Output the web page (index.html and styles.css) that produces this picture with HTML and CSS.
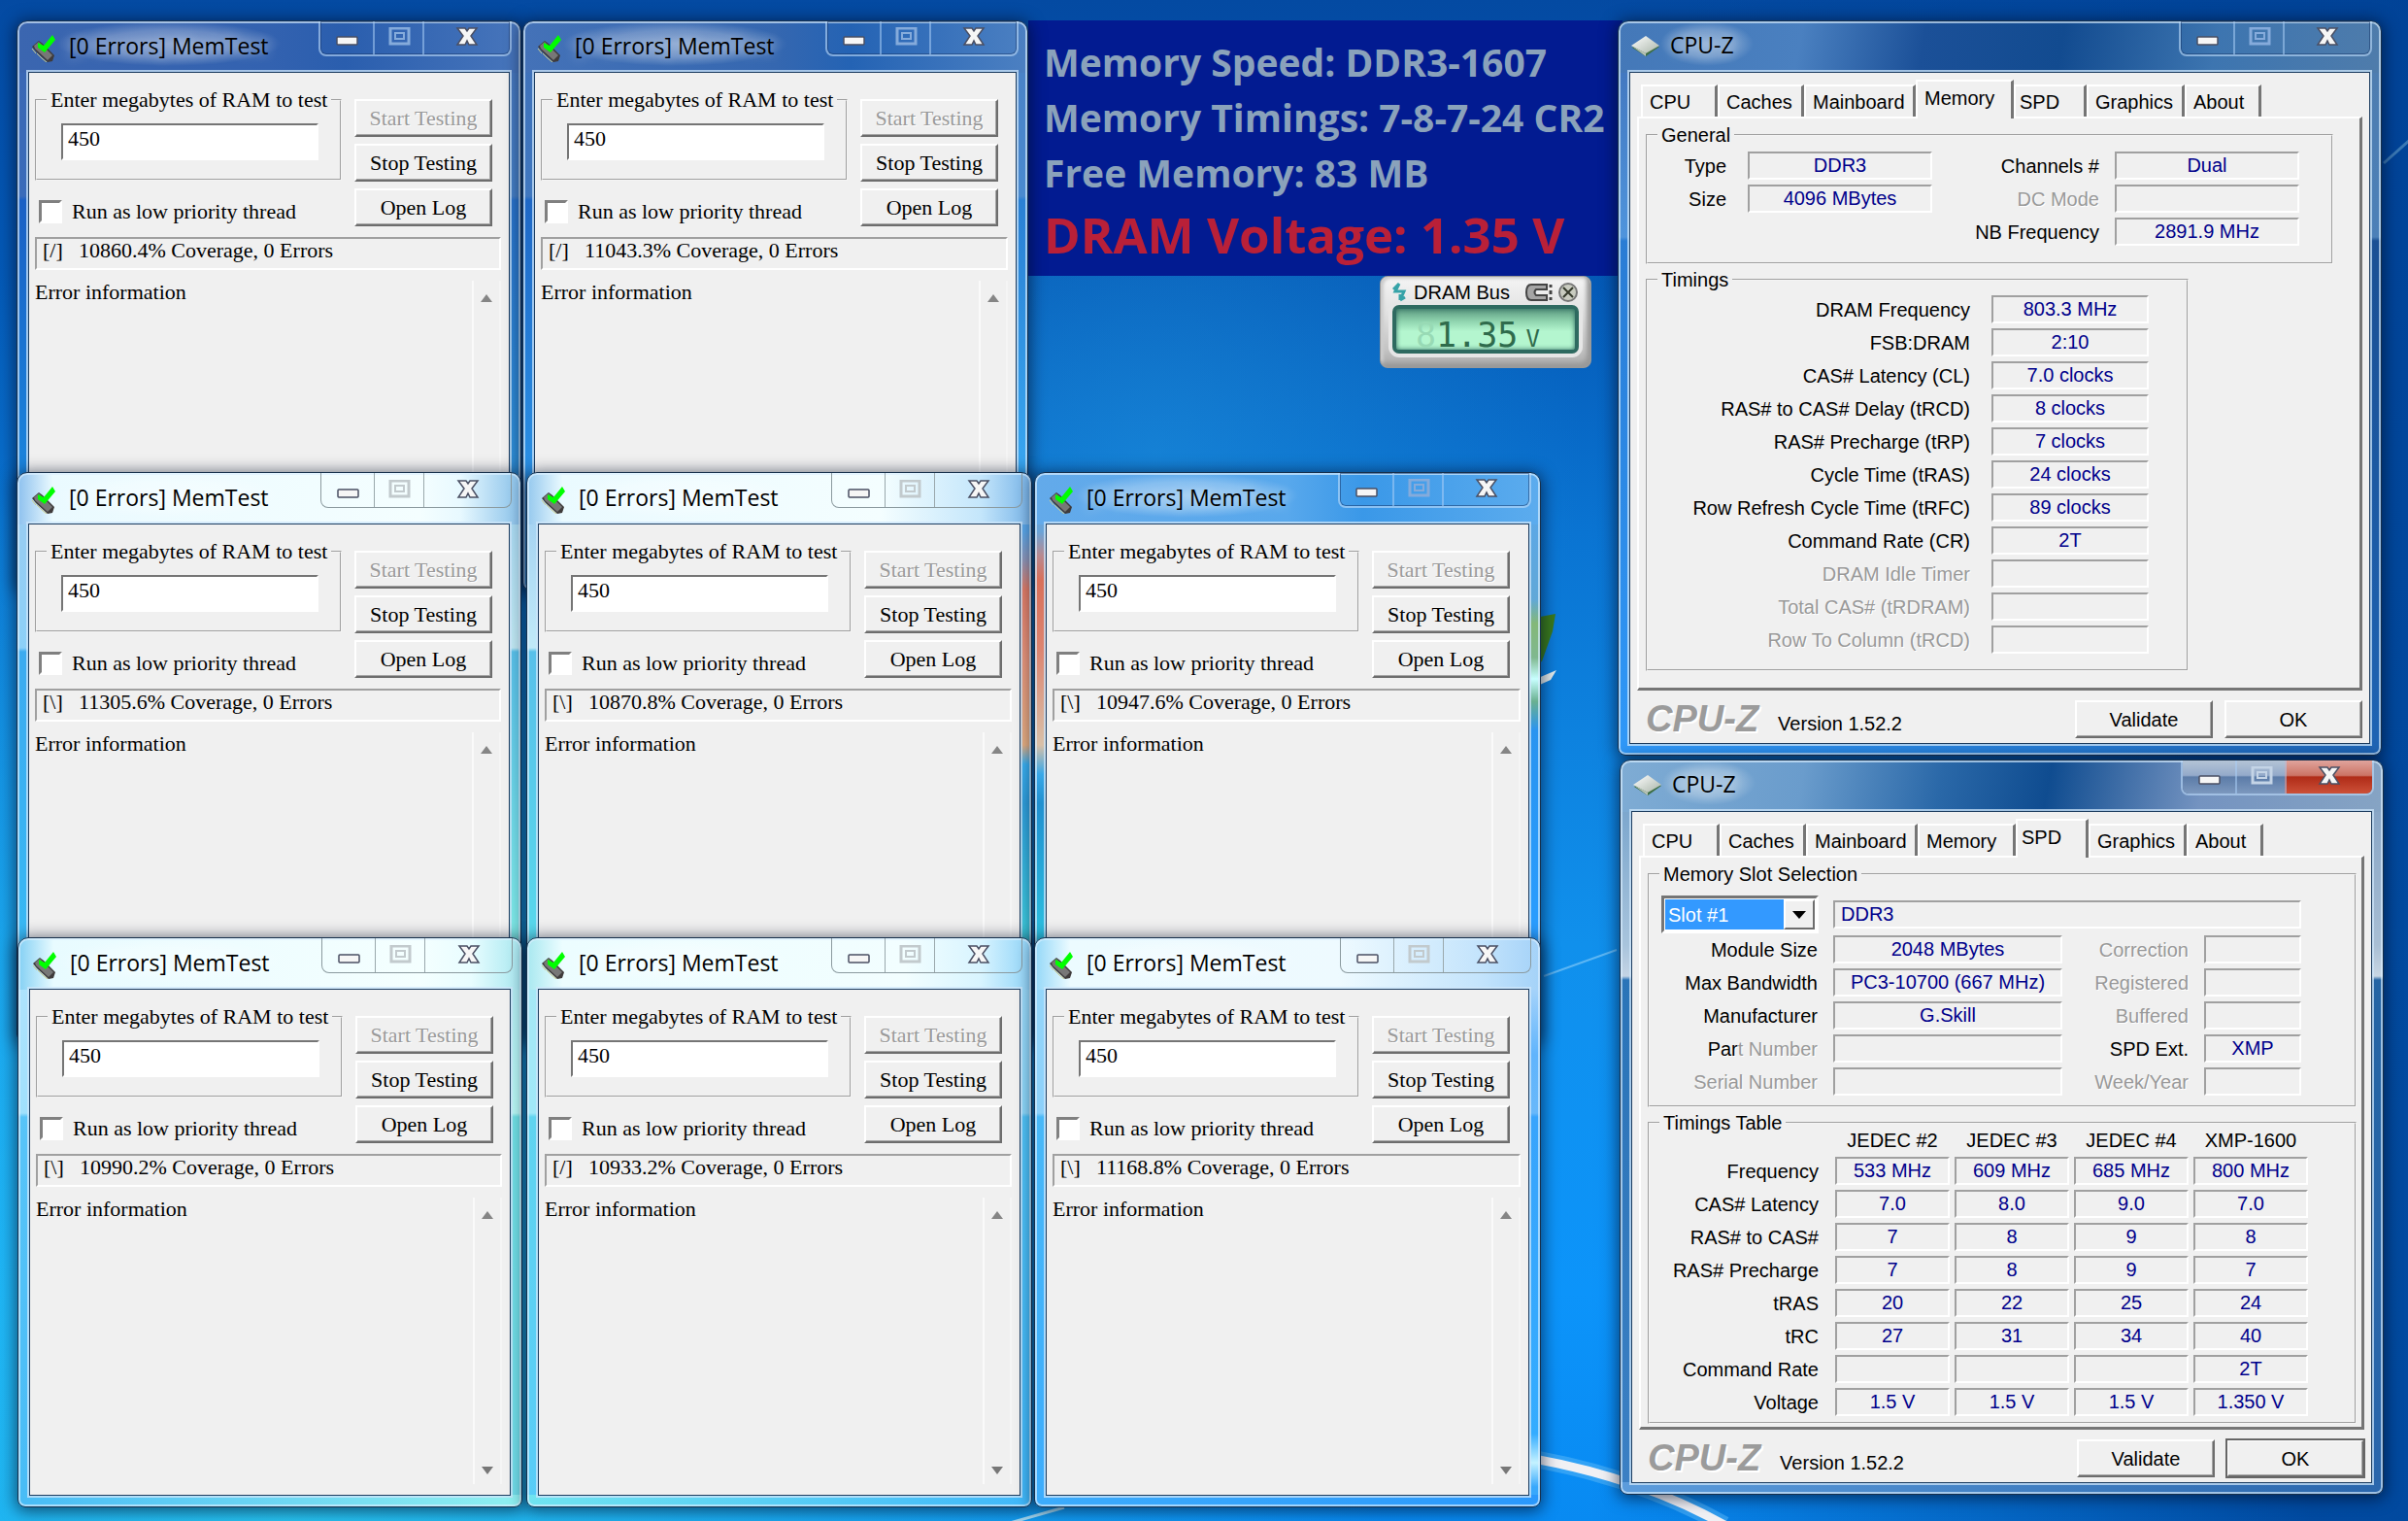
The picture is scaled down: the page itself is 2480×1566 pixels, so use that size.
FILE: index.html
```html
<!DOCTYPE html>
<html lang="en">
<head>
<meta charset="utf-8">
<title>Desktop - MemTest and CPU-Z</title>
<link rel="stylesheet" href="styles.css">
</head>
<body>
<svg class="defs" aria-hidden="true">
  <defs>
    <linearGradient id="stone" x1="0" y1="0" x2="1" y2="1"><stop offset="0" stop-color="#fff"/><stop offset="1" stop-color="#a9b5a9"/></linearGradient>
  </defs>
  <symbol id="i-chip" viewBox="0 0 26 28">
    <path d="M1 12 8 6 12 9 24 21 22 27 17 28 5 17Z" fill="#3f3b3b"/>
    <path d="M3 11 8 7 22 21 17 26 4 14Z" fill="#777"/>
    <path d="M1 14 5 19M6 19 11 24M11 24 16 28" stroke="#c9cc8e" stroke-width="1"/>
    <path d="M7 8 13 11 22 0 25 5 14 18 7 13Z" fill="#0f0"/>
  </symbol>
  <symbol id="i-gem" viewBox="0 0 30 22">
    <path d="M15 2 29 11 15 21 1 12Z" fill="#3c6e44"/>
    <path d="M15 0 29 10 15 18 0 10Z" fill="url(#stone)"/>
    <path d="M0 10 15 18V21Z" fill="#b9c4b9"/>
  </symbol>
  <symbol id="i-min" viewBox="0 0 24 20"><rect x="2" y="10" width="21" height="8" rx="1" fill="#f6f6f6" stroke="#4a4f63" stroke-width="1.5"/></symbol>
  <symbol id="i-max" viewBox="0 0 24 20"><rect x="3" y="1" width="19" height="16" fill="none" stroke="currentColor" stroke-width="3"/><rect x="8" y="6" width="9" height="6" fill="none" stroke="currentColor" stroke-width="2"/></symbol>
  <symbol id="i-close" viewBox="0 0 24 20">
    <path d="M2 1h8l2 3 2-3h8l-6 8 6 9h-8l-2-4-2 4H2l6-9Z" fill="#f6f6f6" stroke="#4a4f63" stroke-width="1.5"/>
  </symbol>
</svg>

<main class="desktop">
  <svg class="wallpaper" viewBox="0 0 2480 1566" preserveAspectRatio="none" aria-hidden="true">
    <path d="M1560 640 1602 632 1599 650 1588 681 1560 690Z" fill="#3a7a1c"/>
    <path d="M1570 704 1603 690 1597 700 1570 712Z" fill="#e4ecec"/>
    <path d="M1590 1005 1665 978" stroke="#5cb6f4" stroke-width="2"/>
    <path d="M1040 1568 1096 1552" stroke="#a5dcf5" stroke-width="3"/>
    <path d="M2455 168 2482 144" stroke="#3a78b4" stroke-width="3"/>
    <path d="M1580 1502 Q1690 1522 1776 1570" stroke="#5ab8f8" stroke-width="18" fill="none" opacity=".5"/>
    <path d="M1580 1502 Q1690 1522 1776 1570" stroke="#f0f0f4" stroke-width="9" fill="none"/>
  </svg>

  <section class="note">
    <p>Memory Speed: DDR3-1607</p>
    <p>Memory Timings: 7-8-7-24 CR2</p>
    <p>Free Memory: 83 MB</p>
    <p class="volt">DRAM Voltage: 1.35 V</p>
  </section>

  <section class="meter">
    <header>
      <svg width="16" height="20" viewBox="0 0 16 20"><path d="M7 1 3 9H12L8 18M8 18V12M8 18 13 15M7 1 1 7" fill="none" stroke="#36a3a8" stroke-width="3"/></svg>
      <h2>DRAM Bus</h2>
      <svg class="end" width="30" height="20" viewBox="0 0 30 20"><path d="M23 2H7Q2 2 2 10T7 18H23V13H12Q9 10 12 7H23Z" fill="#a5a5a5" stroke="#444" stroke-width="2"/><path d="M27 2V5M27 8V12M27 15V18" stroke="#444" stroke-width="3"/></svg>
      <svg width="22" height="22" viewBox="0 0 22 22"><circle cx="11" cy="11" r="9" fill="#c9ccc0" stroke="#777" stroke-width="2"/><path d="M6 6 16 16M16 6 6 16" stroke="#353a2c" stroke-width="2"/></svg>
    </header>
    <div class="lcd"><span class="ghost">8</span><span class="digits">1.35</span><span class="unit">V</span></div>
  </section>

  <div id="memtests"></div>

  <section class="window cpuz cpuz-memory">
    <header class="titlebar"><svg width="30" height="22"><use href="#i-gem"/></svg><h1>CPU-Z</h1>
      <div class="caption"><button aria-label="Minimize"><svg><use href="#i-min"/></svg></button><button aria-label="Maximize" class="max"><svg><use href="#i-max"/></svg></button><button aria-label="Close" class="close"><svg><use href="#i-close"/></svg></button></div>
    </header>
    <div class="client">
      <nav class="tabs"><button>CPU</button><button>Caches</button><button>Mainboard</button><button class="active">Memory</button><button>SPD</button><button>Graphics</button><button>About</button></nav>
      <div class="page">
        <fieldset class="general"><legend>General</legend>
          <div class="fields">
            <label><span>Type</span><output>DDR3</output></label>
            <label><span>Size</span><output>4096 MBytes</output></label>
          </div>
          <div class="fields">
            <label><span>Channels #</span><output>Dual</output></label>
            <label class="off"><span>DC Mode</span><output></output></label>
            <label><span>NB Frequency</span><output>2891.9 MHz</output></label>
          </div>
        </fieldset>
        <fieldset class="timings"><legend>Timings</legend>
          <div class="fields">
            <label><span>DRAM Frequency</span><output>803.3 MHz</output></label>
            <label><span>FSB:DRAM</span><output>2:10</output></label>
            <label><span>CAS# Latency (CL)</span><output>7.0 clocks</output></label>
            <label><span>RAS# to CAS# Delay (tRCD)</span><output>8 clocks</output></label>
            <label><span>RAS# Precharge (tRP)</span><output>7 clocks</output></label>
            <label><span>Cycle Time (tRAS)</span><output>24 clocks</output></label>
            <label><span>Row Refresh Cycle Time (tRFC)</span><output>89 clocks</output></label>
            <label><span>Command Rate (CR)</span><output>2T</output></label>
            <label class="off"><span>DRAM Idle Timer</span><output></output></label>
            <label class="off"><span>Total CAS# (tRDRAM)</span><output></output></label>
            <label class="off"><span>Row To Column (tRCD)</span><output></output></label>
          </div>
        </fieldset>
      </div>
      <footer><strong>CPU-Z</strong><span>Version 1.52.2</span><button class="btn">Validate</button><button class="btn">OK</button></footer>
    </div>
  </section>

  <section class="window cpuz cpuz-spd">
    <header class="titlebar"><svg width="30" height="22"><use href="#i-gem"/></svg><h1>CPU-Z</h1>
      <div class="caption"><button aria-label="Minimize"><svg><use href="#i-min"/></svg></button><button aria-label="Maximize" class="max"><svg><use href="#i-max"/></svg></button><button aria-label="Close" class="close"><svg><use href="#i-close"/></svg></button></div>
    </header>
    <div class="client">
      <nav class="tabs"><button>CPU</button><button>Caches</button><button>Mainboard</button><button>Memory</button><button class="active">SPD</button><button>Graphics</button><button>About</button></nav>
      <div class="page">
        <fieldset class="slots"><legend>Memory Slot Selection</legend>
          <div class="slot-row">
            <div class="combo"><select aria-label="Memory slot"><option>Slot #1</option></select><span class="drop"></span></div>
            <output class="wide">DDR3</output>
          </div>
          <div class="slot-cols">
            <div class="fields">
              <label><span>Module Size</span><output>2048 MBytes</output></label>
              <label><span>Max Bandwidth</span><output>PC3-10700 (667 MHz)</output></label>
              <label><span>Manufacturer</span><output>G.Skill</output></label>
              <label class="off"><span><b>Par</b>t Number</span><output></output></label>
              <label class="off"><span>Serial Number</span><output></output></label>
            </div>
            <div class="fields flags">
              <label class="off"><span>Correction</span><output></output></label>
              <label class="off"><span>Registered</span><output></output></label>
              <label class="off"><span>Buffered</span><output></output></label>
              <label><span>SPD Ext.</span><output>XMP</output></label>
              <label class="off"><span>Week/Year</span><output></output></label>
            </div>
          </div>
        </fieldset>
        <fieldset class="table-box"><legend>Timings Table</legend>
          <table>
            <thead><tr><td></td><th>JEDEC #2</th><th>JEDEC #3</th><th>JEDEC #4</th><th>XMP-1600</th></tr></thead>
            <tbody>
              <tr><th>Frequency</th><td>533 MHz</td><td>609 MHz</td><td>685 MHz</td><td>800 MHz</td></tr>
              <tr><th>CAS# Latency</th><td>7.0</td><td>8.0</td><td>9.0</td><td>7.0</td></tr>
              <tr><th>RAS# to CAS#</th><td>7</td><td>8</td><td>9</td><td>8</td></tr>
              <tr><th>RAS# Precharge</th><td>7</td><td>8</td><td>9</td><td>7</td></tr>
              <tr><th>tRAS</th><td>20</td><td>22</td><td>25</td><td>24</td></tr>
              <tr><th>tRC</th><td>27</td><td>31</td><td>34</td><td>40</td></tr>
              <tr><th>Command Rate</th><td></td><td></td><td></td><td>2T</td></tr>
              <tr><th>Voltage</th><td>1.5 V</td><td>1.5 V</td><td>1.5 V</td><td>1.350 V</td></tr>
            </tbody>
          </table>
        </fieldset>
      </div>
      <footer><strong>CPU-Z</strong><span>Version 1.52.2</span><button class="btn">Validate</button><button class="btn default">OK</button></footer>
    </div>
  </section>
</main>

<template id="memtest">
  <section class="window memtest">
    <header class="titlebar"><svg width="26" height="28"><use href="#i-chip"/></svg><h1>[0 Errors] MemTest</h1>
      <div class="caption"><button aria-label="Minimize"><svg><use href="#i-min"/></svg></button><button aria-label="Maximize" class="max"><svg><use href="#i-max"/></svg></button><button aria-label="Close" class="close"><svg><use href="#i-close"/></svg></button></div>
    </header>
    <div class="client">
      <div class="setup">
        <div class="options">
          <fieldset><legend>Enter megabytes of RAM to test</legend><input type="text" value="450" aria-label="Enter megabytes of RAM to test"></fieldset>
          <label class="check"><input type="checkbox">Run as low priority thread</label>
        </div>
        <div class="actions"><button class="btn" disabled>Start Testing</button><button class="btn">Stop Testing</button><button class="btn">Open Log</button></div>
      </div>
      <p class="status"><span class="spin"></span><span class="coverage"></span></p>
      <div class="log"><p>Error information</p><div class="scroll"><i class="up"></i><i class="down"></i></div></div>
    </div>
  </section>
</template>
<script src="app.js"></script>
</body>
</html>
```
FILE: app.js
```js
// One entry per running MemTest instance, back to front.
const instances = [
  { slot: 'm1', spin: '[/]', coverage: '10860.4%' },
  { slot: 'm2', spin: '[/]', coverage: '11043.3%' },
  { slot: 'm3', spin: '[\\]', coverage: '11305.6%', light: true },
  { slot: 'm4', spin: '[\\]', coverage: '10870.8%', light: true },
  { slot: 'm5', spin: '[\\]', coverage: '10947.6%' },
  { slot: 'm6', spin: '[\\]', coverage: '10990.2%', light: true },
  { slot: 'm7', spin: '[/]', coverage: '10933.2%', light: true },
  { slot: 'm8', spin: '[\\]', coverage: '11168.8%', light: true },
];
const template = document.getElementById('memtest');
const layer = document.getElementById('memtests');
for (const item of instances) {
  const node = template.content.cloneNode(true);
  const win = node.querySelector('.window');
  win.classList.add(item.slot);
  if (item.light) win.classList.add('light');
  node.querySelector('.spin').textContent = item.spin;
  node.querySelector('.coverage').textContent = item.coverage + ' Coverage, 0 Errors';
  layer.append(node);
}
```
FILE: styles.css
```css
* { box-sizing: border-box; }
body { margin: 0; background: #0a70cf; }
h1, h2, p { margin: 0; }
h1, h2 { font-weight: normal; }
button, input, select { font: inherit; color: inherit; margin: 0; }
fieldset { min-width: 0; margin: 0; }
.defs { position: absolute; width: 0; height: 0; }

.desktop {
  position: relative;
  min-height: 100vh;
  overflow: hidden;
  font: 20px/24px "Liberation Sans", Arial, sans-serif;
  color: #000;
  background:
    linear-gradient(90deg, rgba(0,70,160,0) 66%, rgba(0,66,150,.9) 96%),
    radial-gradient(circle at 12% 100%, rgba(50,215,240,.75) 0, rgba(30,180,240,0) 42%),
    radial-gradient(circle at 48% 30%, rgba(40,160,230,.4) 0, rgba(30,150,230,0) 26%),
    linear-gradient(180deg, #044aa2 0, #0459b6 18%, #0a74d2 35%, #1090ec 62%, #0c94fa 85%, #088af2 100%);
}
.wallpaper { position: absolute; inset: 0; width: 100%; height: 100%; }

/* overlay note */
.note {
  position: absolute; left: 1059px; top: 21px; width: 612px; height: 263px;
  padding: 14px 16px;
  background: #021b91;
  color: #8aa2bb;
  font: bold 39px/57px "Open Sans", "Noto Sans", sans-serif;
  white-space: nowrap;
}
.note .volt { font-size: 51px; line-height: 70px; color: #b92038; }

/* voltage meter */
.meter {
  position: absolute; left: 1421px; top: 284px; width: 218px; height: 95px;
  padding: 3px 12px 10px;
  border-radius: 8px;
  border: 1px solid #999;
  background: linear-gradient(180deg, #f4f4f4 0, #e2e2e2 40%, #c4c4c4 80%, #a8a8a8 100%);
  box-shadow: inset -4px -4px 4px #999, inset 3px 2px 3px #ccc;
}
.meter header { display: flex; align-items: center; gap: 4px; height: 26px; }
.meter h2 { font-size: 20px; margin-left: 2px; }
.meter .end { margin-left: auto; }
.lcd {
  display: flex; align-items: baseline;
  height: 50px; padding: 7px 0 0 20px;
  border: 4px solid #2e6a60; border-radius: 7px;
  background: linear-gradient(180deg, #5b9980 0, #8fd3ae 30%, #b4f6cf 55%, #b4f6cf 100%);
  box-shadow: 0 0 0 4px #e6e6e6, inset 0 0 5px #2e6a60;
  font: 35px/40px "DejaVu Sans Mono", monospace; color: #2f6b4c;
}
.ghost { color: #98dab5; }
.unit { font-size: 24px; margin-left: 8px; }

/* glass windows */
.window {
  position: absolute;
  display: flex; flex-direction: column;
  padding: 0 12px 12px;
  border: 1px solid #17304c;
  border-radius: 11px 11px 8px 8px;
  background:
    var(--title) top / 100% 53px no-repeat,
    linear-gradient(90deg, var(--bl), var(--br)) bottom / 100% 12px no-repeat,
    var(--left) left / 50% 100% no-repeat,
    var(--right) right / 50% 100% no-repeat;
  box-shadow: inset 0 0 0 2px rgba(220,240,255,.65), 0 2px 16px 2px rgba(0,12,35,.6);
}
.titlebar { display: flex; align-items: flex-start; height: 53px; flex: none; }
.titlebar > svg { margin: 14px 0 0 2px; flex: none; }
.titlebar h1 {
  font: 23px/28px "Open Sans", "Noto Sans", sans-serif;
  padding: 11px 13px 7px;
  background: radial-gradient(closest-side, rgba(255,255,255,.4), rgba(255,255,255,.25) 60%, rgba(255,255,255,0));
  text-shadow: 0 0 12px rgba(255,255,255,.6);
}
.caption {
  display: grid; grid-template-columns: 54px 51px 90px;
  margin: 0 -3px 0 auto;
  height: 36px;
  border: 2px solid rgba(190,220,250,.6); border-top: 0;
  border-radius: 0 0 8px 8px;
  box-shadow: inset 0 0 0 1px rgba(20,50,100,.5);
  color: #85abdb;
}
.caption button { display: grid; place-items: center; padding: 0; border: 0; background: none; }
.caption button + button { border-left: 2px solid rgba(170,205,245,.55); }
.caption svg { width: 24px; height: 20px; margin-bottom: 2px; }
.light .caption { color: #c2cacd; border-color: #8b9a9f; border-width: 0 1px 1px; box-shadow: none; }
.light .caption button + button { border-left: 1px solid #9aa8ac; }
.client {
  flex: 1; display: flex; flex-direction: column;
  background: #f0f0f0;
  outline: 1px solid #1d3d60;
  box-shadow: 0 0 0 3px rgba(205,230,250,.75);
}

.btn {
  width: 142px; height: 39px; padding: 0;
  background: #f0f0f0;
  border: 2px solid; border-color: #fff #6d6d6d #6d6d6d #fff;
  box-shadow: inset -1px -1px 0 #a5a5a5;
}
.btn:disabled { color: #9a9a9a; text-shadow: 1px 1px 0 #fff; }

/* MemTest */
.memtest { width: 520px; height: 587px; }
.memtest .client { padding: 16px 8px 11px 6px; font: 22px/24px "Liberation Serif", "Times New Roman", serif; }
.setup { display: flex; gap: 13px; }
.options { width: 316px; }
.options fieldset { height: 95px; padding: 12px 0 0 25px; border: 2px groove #f4f4f4; }
.options legend { margin-left: -15px; padding: 0 4px; }
.options input[type=text] {
  display: block; width: 265px; height: 38px; padding: 0 5px 6px;
  background: #fff; border: 2px solid; border-color: #757575 #fff #fff #757575;
}
.check { display: flex; align-items: center; gap: 10px; height: 28px; margin: 18px 0 0 4px; }
.check input {
  appearance: none; width: 24px; height: 24px;
  background: #fff; border: 3px solid; border-color: #808080 #fff #fff #808080;
}
.actions { display: flex; flex-direction: column; gap: 7px; padding-top: 11px; }
.status {
  display: flex; gap: 17px; height: 34px; margin-top: 11px; padding: 0 6px;
  border: 2px solid; border-color: #a0a0a0 #fff #fff #a0a0a0;
}
.spin { width: 20px; }
.log { flex: 1; display: flex; justify-content: space-between; margin-top: 11px; }
.scroll {
  display: flex; flex-direction: column; justify-content: space-between; align-items: center;
  width: 30px; padding: 14px 0 10px;
  border-left: 2px solid #fafafa; border-right: 2px solid #f5f5f5;
}
.scroll i { border: 6px solid transparent; }
.scroll .up { border-top: 0; border-bottom: 8px solid #858585; }
.scroll .down { border-bottom: 0; border-top: 8px solid #777; }

.m1 { left: 17px; top: 21px; --bl: #1a84dc; --br: #2f93dc;
  --title: linear-gradient(90deg, #3b66b0, #3362b0 50%, #2a5eae 65%, #4775bb);
  --left: linear-gradient(180deg, #3a66b2, #3a6cba 180px, #1a60c4 184px, #1a84dc 465px);
  --right: linear-gradient(180deg, #4775bb, #4580c6 180px, #2a74cc 184px, #2f93dc 465px); }
.m2 { left: 538px; top: 21px; width: 521px; --bl: #2a90e4; --br: #38a6f0;
  --title: linear-gradient(90deg, #4472b8, #3567b0 50%, #2463b4 65%, #4c80c2);
  --left: linear-gradient(180deg, #3f70b8, #4078c0 180px, #1f68c6 184px, #2a90e4 465px);
  --right: linear-gradient(180deg, #4a80c4, #4a8ad0 180px, #2a80d4 184px, #38a6f0 465px); }
.m3 { left: 17px; top: 486px; --bl: #38b8f4; --br: #80ece8;
  --title: linear-gradient(90deg, #8cc0ee, #eafaff 7%, #f4feff 80%, #e8f9ff 88%, #8ac2ea);
  --left: linear-gradient(180deg, #9ccbf0, #8cd0f8 180px, #3cabf0 184px, #38b8f4 480px);
  --right: linear-gradient(180deg, #a0d4f0, #c0e8f2 180px, #58c0e8 184px, #80ece8 480px); }
.m4 { left: 542px; top: 486px; width: 521px; --bl: #58d8ec; --br: #3fd0e0;
  --title: linear-gradient(90deg, #94c8ee, #eafaff 7%, #f4feff 70%, #c4e6fb 90%, #78b4e8);
  --left: linear-gradient(180deg, #9ccbf0, #c0eaf8 180px, #58c0ea 184px, #58d8ec 480px);
  --right: linear-gradient(180deg, #5aa7e8 60px, #8f95b5 90px, #e07c66 120px, #e8957a 190px, #e4ad80 280px, #3ab0f0 300px, #2f9fdc 340px, #3fd0e0 480px); }
.m5 { left: 1065px; top: 486px; width: 522px; --bl: #2cc0e0; --br: #2a9dff;
  --title: linear-gradient(90deg, #63aaea, #58a8ec 50%, #3a98e8 65%, #5cacee);
  --left: linear-gradient(180deg, #6aa4d8 60px, #b88a90 85px, #d8705a 110px, #dc8470 180px, #d8c0a8 280px, #38a8e8 310px, #2090d0 340px, #2cc0e0 480px);
  --right: linear-gradient(180deg, #5aa8ee, #60a8d8 130px, #84b878 155px, #80b890 190px, #c8ffff 212px, #6ab090 235px, #2a94f0 265px, #2a9dff 480px); }
.m6 { left: 18px; top: 965px; --bl: #48bcf6; --br: #90f0f0;
  --title: linear-gradient(90deg, #84d0f4, #e8fbff 7%, #f4ffff 80%, #e8fdff 90%, #a8e8f0);
  --left: linear-gradient(180deg, #b4e4fc, #a0e0fc 180px, #58c4f8 184px, #48bcf6 587px);
  --right: linear-gradient(180deg, #b0e8f0, #b8f8f4 180px, #70e0e4 184px, #70dce8 587px); }
.m7 { left: 542px; top: 965px; width: 521px; --bl: #70e4f0; --br: #40b8fa;
  --title: linear-gradient(90deg, #a8e8f0, #ecfdff 7%, #f2feff 75%, #d8f4ff 90%, #90d4f8);
  --left: linear-gradient(180deg, #a8e8f4, #a0e8f8 180px, #60d4f0 184px, #58ccf8 587px);
  --right: linear-gradient(180deg, #a0dcfa, #8cd8fa 180px, #50c4f8 184px, #40b8fa 587px); }
.m8 { left: 1065px; top: 965px; width: 522px; --bl: #3cacfc; --br: #2a98fc;
  --title: linear-gradient(90deg, #94d8f8, #ecfbff 7%, #eefaff 60%, #c4e4fc 88%, #a4d2f8);
  --left: linear-gradient(180deg, #98d8fa, #8cd0fa 180px, #48b8f8 184px, #3cacfc 587px);
  --right: linear-gradient(180deg, #a8d4fa 50px, #60b4fc 120px, #68b8fa 180px, #38a4fc 184px, #34acff 510px, #c4f2ff 540px, #38a8fc 565px); }

/* CPU-Z */
.cpuz { width: 787px; height: 757px; }
.cpuz .titlebar > svg { margin: 15px 0 0 1px; }
.cpuz .titlebar h1 { padding: 10px 20px 8px 10px; }
.cpuz-memory { left: 1666px; top: 21px; --bl: #2f98f8; --br: #1e64b4;
  --title: linear-gradient(100deg, #4478b8, #4a80c0 24%, #1b5098 40%, #124b90 58%, #3d75b0 78%, #4f7cab);
  --left: linear-gradient(180deg, #3f70b8, #4f94dc 222px, #2a7cd4 226px, #2f98f8);
  --right: linear-gradient(180deg, #4e7cae, #4c80b8 222px, #1a5094 226px, #1e64b4); }
.cpuz-spd { left: 1668px; top: 782px; --bl: #5c9cdc; --br: #2a66ac;
  --title: linear-gradient(100deg, #7facd4, #6a9ccc 24%, #2a68a8 42%, #0f4c90 56%, #7493c0 76%, #86a4c4);
  --left: linear-gradient(180deg, #6c9cc8, #a8c4dc 190px, #c4d4e4 222px, #2a74b8 226px, #3c80c4);
  --right: linear-gradient(180deg, #7c9cc0, #a8bed4 190px, #c8d6e4 222px, #2464a4 226px, #2a66ac); }
.cpuz-spd .caption { color: #c4d4e6; }
.cpuz-spd .caption button { background: linear-gradient(180deg, #b4c4d6 0, #94aaca 45%, #5c7ca8 50%, #7c98be 100%); }
.cpuz-spd .caption button:first-child { border-radius: 0 0 0 6px; }
.cpuz-spd .caption .close { background: linear-gradient(180deg, #e0a49c 0, #cc7466 45%, #b02c18 50%, #cc5038 100%); border-radius: 0 0 6px 0; }
.cpuz .client { padding: 7px 7px 5px; }
.tabs { display: flex; align-items: flex-end; height: 38px; padding-left: 4px; flex: none; }
.tabs button {
  height: 33px; padding: 0 7px; text-align: left;
  background: #f0f0f0;
  border: 0; border-top: 2px solid #fff; border-left: 2px solid #fff; border-right: 3px solid #757575;
}
.tabs button:nth-child(1) { width: 79px; }
.tabs button:nth-child(2) { width: 89px; }
.tabs button:nth-child(3) { width: 115px; }
.tabs button:nth-child(4) { width: 101px; }
.tabs button:nth-child(5) { width: 75px; padding-left: 4px; }
.tabs button:nth-child(6) { width: 101px; }
.tabs button:nth-child(7) { width: 79px; }
.tabs .active { height: 40px; margin-bottom: -2px; padding-bottom: 4px; position: relative; }
.page {
  flex: 1; padding: 5px 7px 0;
  border: 2px solid; border-color: #fff #757575 #757575 #fff; border-right-width: 3px; border-bottom-width: 3px;
}
.page fieldset { border: 2px groove #f4f4f4; }
.page legend { margin-left: 10px; padding: 0 4px; }
.fields { display: grid; grid-auto-rows: 29px; gap: 5px 22px; align-content: start; }
.fields label { display: contents; }
.fields span { text-align: right; line-height: 30px; white-space: nowrap; }
.off { color: #999; text-shadow: 1px 1px 0 #fff; }
.off b { font-weight: normal; color: #000; }
output, tbody td {
  display: block; height: 29px; line-height: 25px; text-align: center; white-space: nowrap;
  color: #00008b;
  border: 2px solid; border-color: #a0a0a0 #fff #fff #a0a0a0;
}
.general { display: flex; justify-content: space-between; width: 708px; height: 145px; padding: 5px 33px 0 31px; }
.page .general legend { margin-left: -21px; }
.general .fields { grid-template-columns: 50px 190px; }
.general .fields + .fields { grid-template-columns: 132px 190px; column-gap: 16px; }
.timings { width: 559px; height: 415px; margin-top: 4px; padding: 4px 39px 0 0; }
.timings .fields { grid-template-columns: 1fr 162px; }
.slots { width: 730px; height: 252px; padding: 10px 55px 0 12px; }
.page .slots legend { margin-left: -2px; }
.slot-row { display: flex; gap: 15px; align-items: center; }
.combo {
  display: flex; width: 162px; height: 39px; padding: 1px;
  background: #fff; border: 3px solid; border-color: #757575 #fff #fff #757575;
}
.combo select { appearance: none; flex: 1; min-width: 0; padding: 0 3px; border: 0; border-radius: 0; background: #39f; color: #fff; }
.drop {
  display: grid; place-items: center; width: 32px; background: #f0f0f0;
  border: 2px solid; border-color: #fff #6d6d6d #6d6d6d #fff;
}
.drop::after { content: ""; border: 7px solid transparent; border-top: 8px solid #000; border-bottom: 0; }
.wide { flex: 1; padding-left: 6px; text-align: left; }
.slot-cols { display: flex; justify-content: space-between; margin-top: 2px; }
.slot-cols .fields { grid-template-columns: 161px 236px; column-gap: 16px; }
.slot-cols .flags { grid-template-columns: 112px 100px; column-gap: 16px; }
.table-box { width: 730px; height: 322px; margin-top: 4px; padding: 0; }
table { border-collapse: separate; border-spacing: 5px; margin-top: -11px; }
table th { font-weight: normal; padding: 0; }
thead th { width: 118px; height: 24px; }
thead td { width: 181px; padding: 0; }
tbody th { text-align: right; padding-right: 12px; height: 29px; }
tbody td { display: table-cell; padding: 0; }
.cpuz footer { display: flex; align-items: center; gap: 12px; padding: 10px 0 0 9px; height: 49px; flex: none; }
.cpuz footer strong { font-size: 38px; line-height: 39px; font-style: italic; color: #9b9b9b; text-shadow: 2px 2px 0 #fff; }
.cpuz footer span { margin: 8px auto 0 8px; }
.btn.default { outline: 2px solid #666; outline-offset: -1px; }
```
